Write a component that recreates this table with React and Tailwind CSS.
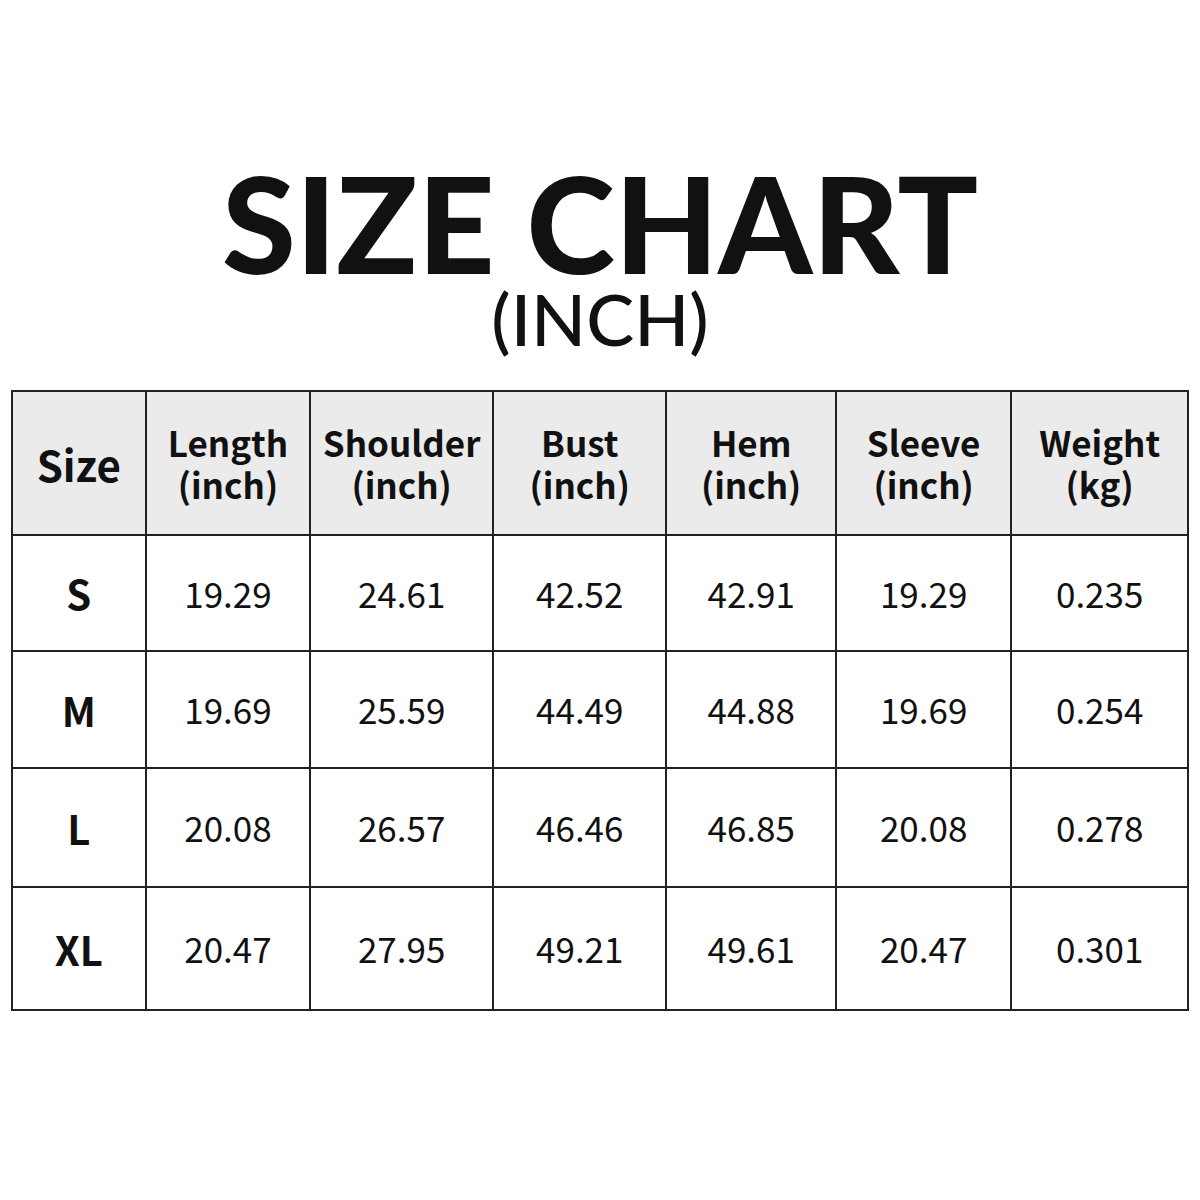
const headers = [
  ['Length', '(inch)'],
  ['Shoulder', '(inch)'],
  ['Bust', '(inch)'],
  ['Hem', '(inch)'],
  ['Sleeve', '(inch)'],
  ['Weight', '(kg)'],
]

const rows = [
  { size: 'S', h: 'h-[116px]', vals: ['19.29', '24.61', '42.52', '42.91', '19.29', '0.235'] },
  { size: 'M', h: 'h-[117px]', vals: ['19.69', '25.59', '44.49', '44.88', '19.69', '0.254'] },
  { size: 'L', h: 'h-[119px]', vals: ['20.08', '26.57', '46.46', '46.85', '20.08', '0.278'] },
  { size: 'XL', h: 'h-[123px]', vals: ['20.47', '27.95', '49.21', '49.61', '20.47', '0.301'] },
]

const colWidths = ['w-[134px]', 'w-[165px]', 'w-[183px]', 'w-[174px]', 'w-[170px]', 'w-[176px]', 'w-[177px]']

export default function App() {
  return (
    <div className="w-[1200px] h-[1200px] bg-white text-[#111] overflow-hidden">
      <div className="pt-[173px] flex flex-col items-center">
        <h1 className="font-['Lato',sans-serif] font-black text-[134px] leading-[100px]">SIZE CHART</h1>
        <p className="font-['Lato',sans-serif] font-medium text-[72px] leading-[72px] mt-[9px]">(INCH)</p>
      </div>
      <div className="px-[11px] mt-[36px]">
        <table className="border-collapse font-['Noto_Sans_CJK_SC','Noto_Sans',sans-serif] text-center">
          <colgroup>
            {colWidths.map((w, i) => (
              <col key={i} className={w} />
            ))}
          </colgroup>
          <thead>
            <tr className="h-[144px] bg-[#ebebeb]">
              <th className="border-2 border-[#222] text-[42px] font-bold">Size</th>
              {headers.map(([a, b]) => (
                <th key={a} className="border-2 border-[#222] text-[35px] leading-[42px] font-bold">
                  {a}
                  <br />
                  {b}
                </th>
              ))}
            </tr>
          </thead>
          <tbody>
            {rows.map((r) => (
              <tr key={r.size} className={r.h}>
                <td className="border-2 border-[#222] text-[40px] font-bold">{r.size}</td>
                {r.vals.map((v, i) => (
                  <td key={i} className="border-2 border-[#222] text-[35px] font-normal">
                    {v}
                  </td>
                ))}
              </tr>
            ))}
          </tbody>
        </table>
      </div>
    </div>
  )
}
